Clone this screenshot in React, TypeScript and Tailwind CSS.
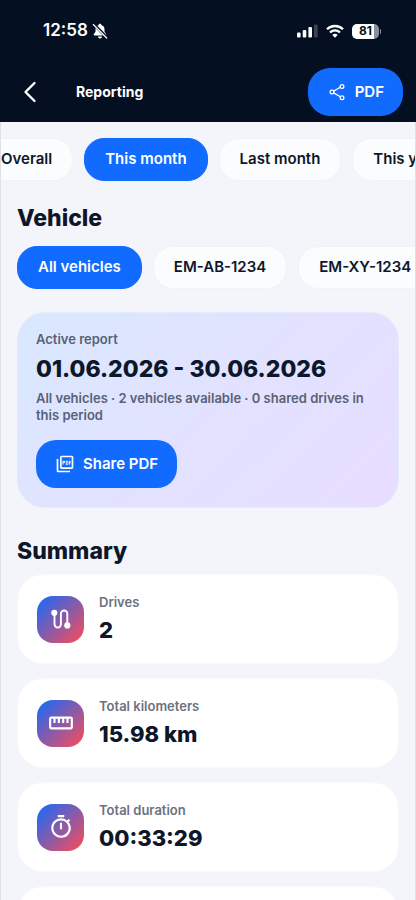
import { useEffect, useRef, useState } from "react";
import type { ReactNode } from "react";
import { IoShareSocialOutline } from "react-icons/io5";
import {
    MdOutlinePictureAsPdf,
    MdOutlineStraighten,
    MdOutlineTimer,
} from "react-icons/md";

const periods = ["Overall", "This month", "Last month", "This year"];
const vehicles = ["All vehicles", "EM-AB-1234", "EM-XY-1234"];

const RouteIcon = () => (
    <svg viewBox="0 0 24 24" className="size-6" fill="none" aria-hidden="true">
        <path
            d="M5.5 6v11.3a3.2 3.2 0 0 0 6.4 0V6.7a3.2 3.2 0 0 1 6.4 0V18"
            stroke="currentColor"
            strokeWidth="1.9"
        />
        <circle cx="5.3" cy="5.8" r="3.1" fill="currentColor" />
        <circle cx="18.3" cy="18.4" r="3.1" fill="currentColor" />
    </svg>
);

const summary = [
    { label: "Drives", value: "2", icon: <RouteIcon /> },
    {
        label: "Total kilometers",
        value: "15.98 km",
        icon: <MdOutlineStraighten className="size-[26px]" />,
    },
    {
        label: "Total duration",
        value: "00:33:29",
        icon: <MdOutlineTimer className="size-[26px]" />,
    },
];

const StatusBar = () => (
    <div className="flex h-[62px] items-center justify-between pl-[43px] pr-[35px]">
        <div className="flex items-center gap-1">
            <span className="text-[17px] font-semibold">12:58</span>
            <svg viewBox="0 0 16 16" className="size-4" aria-label="Silent">
                <path
                    d="M8 .8c-.8 0-1.3.5-1.3 1.2C4.6 2.6 3.5 4.2 3.5 6.4v2.3l-1.7 2.6c-.3.6 0 1.2.7 1.2h11c.7 0 1-.6.7-1.2l-1.7-2.6V6.4c0-2.2-1.1-3.8-3.2-4.4C9.3 1.3 8.8.8 8 .8zM6 13.4a2 2 0 0 0 4 0z"
                    fill="currentColor"
                />
                <path d="M1.8 1.2 15 14.6" stroke="#040f22" strokeWidth="3" />
                <path
                    d="M1.3 1.5 14.7 15"
                    stroke="currentColor"
                    strokeWidth="1.2"
                    strokeLinecap="round"
                />
            </svg>
        </div>
        <div className="flex items-center gap-2">
            <svg viewBox="0 0 21 14" className="h-[14px] w-[21px]" aria-label="Signal">
                <rect x="0" y="8.5" width="3.6" height="5" rx="1" fill="#fff" />
                <rect x="5.7" y="6" width="3.6" height="7.5" rx="1" fill="#fff" />
                <rect x="11.4" y="3" width="3.6" height="10.5" rx="1" fill="#fff" />
                <rect x="17" y="0.5" width="3.6" height="13" rx="1" fill="#3b4454" />
            </svg>
            <svg viewBox="0 0 18 14" className="h-[14px] w-[18px]" aria-label="Wi-Fi">
                <g fill="none" stroke="#fff" strokeWidth="2.3">
                    <path d="M1 5.3a11.3 11.3 0 0 1 16 0" />
                    <path d="M4 8.5a7 7 0 0 1 10 0" />
                </g>
                <path d="M9 13.7 6.3 11a3.8 3.8 0 0 1 5.4 0z" fill="#fff" />
            </svg>
            <div className="flex items-center gap-px">
                <div className="flex h-[15px] w-[27px] items-center justify-center rounded-[5px] bg-linear-to-r from-white from-80% to-[#8a909a] to-80% text-[12px] font-bold text-[#040f22]">
                    81
                </div>
                <div className="h-[5px] w-px rounded-r bg-[#8a909a]" />
            </div>
        </div>
    </div>
);

type ChipRowProps = {
    items: string[];
    initial: string;
    label: string;
    offset?: number;
};

const ChipRow = ({ items, initial, label, offset = 0 }: ChipRowProps) => {
    const [active, setActive] = useState(initial);
    const row = useRef<HTMLDivElement>(null);

    useEffect(() => {
        if (row.current) row.current.scrollLeft = offset;
    }, [offset]);

    return (
        <div
            ref={row}
            role="group"
            aria-label={label}
            className="flex gap-[11px] overflow-x-auto px-4 [scrollbar-width:none]"
        >
            {items.map((x) => (
                <button
                    key={x}
                    type="button"
                    aria-pressed={x === active}
                    onClick={() => setActive(x)}
                    className={
                        "h-[43px] shrink-0 rounded-[20px] border px-5 text-[15px] font-semibold whitespace-nowrap " +
                        (x === active
                            ? "border-[#116bff] bg-[#116bff] text-white"
                            : "border-[#f0f2f8] bg-[#fbfcfe] text-[#0e1729]")
                    }
                >
                    {x}
                </button>
            ))}
        </div>
    );
};

const SummaryCard = ({ children }: { children?: ReactNode }) => (
    <li className="flex min-h-[90px] shrink-0 items-center gap-[15px] rounded-[26px] border border-[#f8f9fd] bg-white px-[19px]">
        {children}
    </li>
);

const App = () => {
    return (
        <div className="flex h-screen flex-col bg-[#f4f5fb] font-['Inter',sans-serif] text-[#0e1729]">
            <header className="shrink-0 bg-[#040f22] text-white">
                <StatusBar />
                <div className="flex h-[60px] items-center pr-[13px] pl-[18px]">
                    <button
                        type="button"
                        aria-label="Back"
                        className="flex size-6 items-center justify-center"
                    >
                        <svg viewBox="0 0 24 24" className="size-6" fill="none">
                            <path
                                d="M16.5 3 7.5 12l9 9"
                                stroke="currentColor"
                                strokeWidth="2.4"
                                strokeLinecap="round"
                                strokeLinejoin="round"
                            />
                        </svg>
                    </button>
                    <h1 className="ml-[34px] text-sm font-bold">Reporting</h1>
                    <button
                        type="button"
                        className="ml-auto flex h-12 items-center gap-2 rounded-[22px] bg-[#116bff] px-[19px] text-[15px] font-semibold"
                    >
                        <IoShareSocialOutline className="size-5" />
                        PDF
                    </button>
                </div>
            </header>
            <main className="min-h-0 flex-1 overflow-y-auto border-x border-[#dfe1e6] pt-4 [scrollbar-width:none]">
                <ChipRow
                    items={periods}
                    initial="This month"
                    label="Period"
                    offset={37}
                />
                <h2 className="mt-[22px] mb-3 px-4 text-[23px] leading-[31px] font-extrabold">
                    Vehicle
                </h2>
                <ChipRow items={vehicles} initial="All vehicles" label="Vehicle" />

                <section className="mx-4 mt-[23px] rounded-[28px] border border-[#e4ecfc] bg-linear-135/srgb from-[#d9e8ff] via-[#e2e2ff] to-[#e8deff] px-[18px] pt-[18px] pb-[19px]">
                    <p className="text-[13px] leading-4 font-semibold text-[#586176]">
                        Active report
                    </p>
                    <p className="mt-2 text-[23px] leading-7 font-extrabold">
                        01.06.2026 - 30.06.2026
                    </p>
                    <p className="mt-[7px] text-[13px] leading-[17px] font-semibold text-[#586176]">
                        All vehicles · 2 vehicles available · 0 shared drives in
                        this period
                    </p>
                    <button
                        type="button"
                        className="mt-4 flex h-12 items-center gap-2 rounded-[20px] bg-[#116bff] px-[19px] text-[15px] font-semibold text-white"
                    >
                        <MdOutlinePictureAsPdf className="size-5" />
                        Share PDF
                    </button>
                </section>

                <h2 className="mt-7 mb-[7px] px-4 text-[23px] leading-[31px] font-extrabold">
                    Summary
                </h2>
                <ul className="flex flex-col gap-[14px] px-4 pb-6">
                    {summary.map((x) => (
                        <SummaryCard key={x.label}>
                            <div className="flex size-[47px] items-center justify-center rounded-2xl bg-linear-135/srgb from-[#116bff] to-[#ff4b55] text-white">
                                {x.icon}
                            </div>
                            <div>
                                <p className="text-[13px] leading-4 font-semibold text-[#6c7280]">
                                    {x.label}
                                </p>
                                <p className="mt-[6px] text-[22px] leading-7 font-extrabold">
                                    {x.value}
                                </p>
                            </div>
                        </SummaryCard>
                    ))}
                    <SummaryCard />
                </ul>
            </main>
        </div>
    );
};

export default App;
